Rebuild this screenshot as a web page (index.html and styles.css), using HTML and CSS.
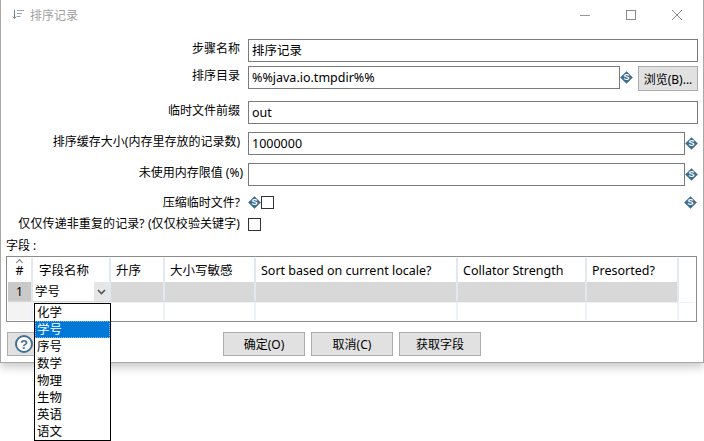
FILE: index.html
```html
<!DOCTYPE html>
<html lang="zh-CN">
<head>
<meta charset="UTF-8">
<title>排序记录</title>
<link rel="stylesheet" href="styles.css">
</head>
<body>
  <div class="window">
    <div class="titlebar">
      <svg class="title-icon" width="12" height="12" viewBox="0 0 12 12">
        <path d="M2.500 1v8M.8 7.500l1.700 2 1.700-2" fill="none" stroke="#6f8596"/>
        <path d="M5 1.500h7M5 4.500h5M5 7.500h3.500" fill="none" stroke="#9aa4ac"/>
      </svg>
      <span class="title-text">排序记录</span>
      <div class="win-controls">
        <svg width="12" height="12" viewBox="0 0 12 12"><path d="M1 6.500h10" stroke="#9a9a9a"/></svg>
        <svg width="12" height="12" viewBox="0 0 12 12"><rect x="1.500" y="1.500" width="9" height="9" fill="none" stroke="#8a8a8a"/></svg>
        <svg width="12" height="12" viewBox="0 0 12 12"><path d="M1 1l10 10M11 1 1 11" stroke="#8a8a8a"/></svg>
      </div>
    </div>

    <div class="row row-name">
      <label class="lbl">步骤名称</label>
      <div class="field">排序记录</div>
    </div>
    <div class="row row-dir">
      <label class="lbl">排序目录</label>
      <div class="field">%%java.io.tmpdir%%</div>
      <span class="var">S</span>
      <button class="btn btn-browse">浏览(B)...</button>
    </div>
    <div class="row row-prefix">
      <label class="lbl">临时文件前缀</label>
      <div class="field">out</div>
    </div>
    <div class="row row-cache">
      <label class="lbl">排序缓存大小(内存里存放的记录数)</label>
      <div class="field">1000000</div>
      <span class="var">S</span>
    </div>
    <div class="row row-free">
      <label class="lbl">未使用内存限值 (%)</label>
      <div class="field"></div>
      <span class="var">S</span>
    </div>
    <div class="row row-zip">
      <label class="lbl">压缩临时文件?</label>
      <span class="var var-left">S</span>
      <span class="check"></span>
      <span class="var var-end">S</span>
    </div>
    <div class="row row-uniq">
      <label class="lbl">仅仅传递非重复的记录? (仅仅校验关键字)</label>
      <span class="check"></span>
    </div>

    <div class="fields-title">字段 :</div>
    <div class="table">
      <div class="tr thead">
        <div class="td c-num"><span class="sort-mark"></span>#</div>
        <div class="td c-name">字段名称</div>
        <div class="td c-asc">升序</div>
        <div class="td c-case">大小写敏感</div>
        <div class="td c-locale">Sort based on current locale?</div>
        <div class="td c-coll">Collator Strength</div>
        <div class="td c-pre">Presorted?</div>
      </div>
      <div class="tr selected">
        <div class="td c-num">1</div>
        <div class="td c-name combo">学号
          <span class="combo-arrow">
            <svg width="9" height="6" viewBox="0 0 9 6"><path d="M1 1l3.500 3.500L8 1" fill="none" stroke="#555" stroke-width="1.600"/></svg>
          </span>
        </div>
        <div class="td c-asc"></div>
        <div class="td c-case"></div>
        <div class="td c-locale"></div>
        <div class="td c-coll"></div>
        <div class="td c-pre"></div>
      </div>
      <div class="tr empty">
        <div class="td c-num"></div>
        <div class="td c-name"></div>
        <div class="td c-asc"></div>
        <div class="td c-case"></div>
        <div class="td c-locale"></div>
        <div class="td c-coll"></div>
        <div class="td c-pre"></div>
      </div>
    </div>

    <div class="footer">
      <button class="btn btn-help">
        <svg width="20" height="20" viewBox="0 0 20 20">
          <circle cx="10" cy="10" r="8" fill="#fff" stroke="#44708f" stroke-width="2"/>
          <text x="10" y="14.500" text-anchor="middle" class="help-q">?</text>
        </svg>
      </button>
      <div class="footer-mid">
        <button class="btn btn-foot">确定(O)</button>
        <button class="btn btn-foot">取消(C)</button>
        <button class="btn btn-foot">获取字段</button>
      </div>
    </div>

    <ul class="dropdown">
      <li>化学</li>
      <li class="current">学号</li>
      <li>序号</li>
      <li>数学</li>
      <li>物理</li>
      <li>生物</li>
      <li>英语</li>
      <li>语文</li>
    </ul>
  </div>
</body>
</html>
```

FILE: styles.css
```css
* {
  box-sizing: border-box;
}
body {
  margin: 0;
  height: 441px;
  overflow: hidden;
  background: #fff;
  font-family: "Noto Sans", "Noto Sans CJK SC", sans-serif;
  font-size: 12px;
  color: #000;
}
.window {
  position: relative;
  width: 704px;
  height: 363px;
  background: #fff;
  border-left: 1px solid #a8a8a8;
  border-right: 1px solid #a8a8a8;
  border-bottom: 1px solid #a8a8a8;
  box-shadow: 0 4px 9px rgba(0, 0, 0, 0.22);
}
.titlebar {
  display: flex;
  align-items: center;
  height: 30px;
  padding-left: 11px;
}
.title-icon {
  margin-right: 6px;
}
.title-text {
  color: #a0a0a0;
}
.win-controls {
  display: flex;
  gap: 34px;
  margin-left: auto;
  margin-right: 20px;
}
.row {
  display: flex;
  align-items: center;
  height: 22px;
}
.lbl {
  flex: none;
  width: 239px;
  margin-bottom: 4px;
  text-align: right;
  white-space: nowrap;
}
.field {
  height: 23px;
  margin-left: 8px;
  padding-left: 3px;
  border: 1px solid #7a7a7a;
  font-size: 12.500px;
  line-height: 21px;
  white-space: nowrap;
}
.row-name {
  margin-top: 9px;
}
.row-name .field,
.row-prefix .field {
  width: 450px;
}
.row-dir {
  margin-top: 5px;
}
.row-dir .field {
  width: 372px;
}
.row-prefix {
  margin-top: 13px;
}
.row-cache {
  margin-top: 9px;
}
.row-cache .field,
.row-free .field {
  width: 437px;
}
.row-free {
  margin-top: 9px;
}
.row-free .lbl {
  width: 242px;
}
.row-free .field {
  margin-left: 5px;
}
.row-zip {
  margin-top: 6px;
}
.row-zip .lbl {
  margin-bottom: 0;
}
.row-uniq .lbl {
  margin-bottom: 2px;
  letter-spacing: 0.1px;
}
.var {
  position: relative;
  z-index: 0;
  flex: none;
  width: 13px;
  height: 13px;
  font-family: "Liberation Sans", sans-serif;
  font-size: 9px;
  font-weight: bold;
  line-height: 13px;
  text-align: center;
  color: #fff;
}
.var::before {
  content: "";
  position: absolute;
  z-index: -1;
  top: 2px;
  left: 2px;
  width: 9px;
  height: 9px;
  background: #3f6d8e;
  transform: rotate(45deg);
}
.var-left {
  margin-left: 8px;
}
.var-end {
  margin-left: auto;
  margin-right: 6px;
}
.check {
  flex: none;
  width: 13px;
  height: 13px;
  border: 1px solid #333;
  background: #fff;
}
.row-uniq .check {
  margin-left: 8px;
}
.btn {
  background: #e1e1e1;
  border: 1px solid #adadad;
  font: inherit;
  color: #000;
  padding: 0;
}
.btn-browse {
  width: 60px;
  height: 25px;
  margin-left: 5px;
  margin-top: 3px;
}
.fields-title {
  height: 17px;
  margin-top: 2px;
  margin-left: 5px;
  line-height: 17px;
}
.table {
  width: 691px;
  height: 66px;
  margin-top: 2px;
  margin-left: 5px;
  border: 1px solid #8c8c8c;
  padding: 1px;
}
.tr {
  display: flex;
}
.td {
  flex: none;
  border-right: 2px solid #e3e8ee;
  white-space: nowrap;
  overflow: hidden;
}
.thead {
  height: 24px;
  line-height: 24px;
  font-size: 12.500px;
}
.thead .td {
  padding-top: 1px;
  padding-left: 5px;
}
.selected {
  height: 20px;
  line-height: 20px;
  background: #d8d8d8;
  margin-right: 17px;
  border-bottom: 1px solid #d8d8d8;
}
.empty {
  height: 18px;
  border-top: 1px solid #f0f0f0;
}
.empty .td {
  border-right-color: #edf2fa;
}
.c-num {
  position: relative;
  width: 25px;
  text-align: center;
}
.thead .c-num {
  padding-left: 0;
}
.selected .c-num {
  background: #c9c9c9;
}
.empty .c-num {
  background: #f3f3f3;
}
.sort-mark {
  position: absolute;
  top: 2px;
  left: 9px;
  width: 5px;
  height: 5px;
  border-top: 1px solid #777;
  border-left: 1px solid #777;
  transform: rotate(45deg);
}
.c-name {
  width: 78px;
}
.thead .c-name {
  padding-left: 6px;
}
.c-asc {
  width: 54px;
}
.c-case {
  width: 91px;
}
.c-locale {
  width: 202px;
}
.c-coll {
  width: 129px;
}
.c-pre {
  width: 92px;
}
.combo {
  position: relative;
  padding-left: 2px;
  font-size: 12.500px;
  background: #fff;
}
.combo-arrow {
  position: absolute;
  top: 0;
  right: 0;
  display: flex;
  align-items: center;
  justify-content: center;
  width: 15px;
  height: 20px;
  background: #e6e6e6;
}
.footer {
  display: flex;
  height: 24px;
  margin-top: 10px;
  margin-left: 6px;
}
.btn-help {
  display: flex;
  align-items: center;
  justify-content: center;
  width: 33px;
  height: 24px;
}
.footer-mid {
  display: flex;
  gap: 6px;
  margin-left: 183px;
}
.btn-foot {
  width: 82px;
  height: 24px;
}
.help-q {
  font-family: "Liberation Sans", sans-serif;
  font-size: 13px;
  font-weight: bold;
  fill: #44708f;
}
.dropdown {
  position: absolute;
  top: 303px;
  left: 33px;
  width: 77px;
  height: 138px;
  margin: 0;
  padding: 0;
  list-style: none;
  font-size: 12.500px;
  background: #fff;
  border: 1px solid #000;
}
.dropdown li {
  height: 17px;
  line-height: 17px;
  padding-left: 2px;
}
.dropdown .current {
  background: #0078d7;
  color: #fff;
  outline: 1px dotted #7fb5e6;
  outline-offset: -1px;
}
```
